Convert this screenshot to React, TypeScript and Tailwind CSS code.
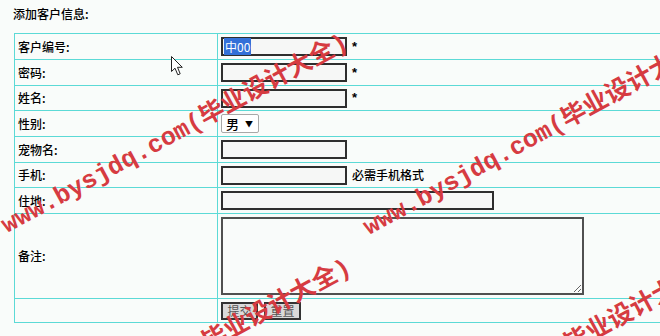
const rows: { label: string; h: string; kind: string; note?: string }[] = [
  { label: "客户编号:", h: "h-[26px]", kind: "code", note: "*" },
  { label: "密码:", h: "h-[26px]", kind: "input", note: "*" },
  { label: "姓名:", h: "h-[25px]", kind: "input", note: "*" },
  { label: "性别:", h: "h-[26px]", kind: "select" },
  { label: "宠物名:", h: "h-[26px]", kind: "input" },
  { label: "手机:", h: "h-[25px]", kind: "input", note: "必需手机格式" },
  { label: "住地:", h: "h-[26px]", kind: "wide" },
  { label: "备注:", h: "h-[85px]", kind: "textarea" },
  { label: "", h: "h-[24px]", kind: "buttons" },
];

function Field({ kind, note }: { kind: string; note?: string }) {
  const box = "inline-block h-[19px] border-2 border-[#2e2e2e] bg-[#f6f7f6] align-middle";
  let control = null;
  if (kind === "code") {
    control = (
      <span className={`${box} w-[126px] pl-px leading-[15px]`}>
        <span className="bg-[#3470d8] px-px font-normal text-white">中00</span>
      </span>
    );
  } else if (kind === "input") {
    control = <span className={`${box} w-[126px]`} />;
  } else if (kind === "wide") {
    control = <span className={`${box} w-[273px]`} />;
  } else if (kind === "select") {
    control = (
      <span className="inline-flex h-[19px] w-[38px] items-center rounded-[2px] border border-[#a8a8a8] bg-white pl-[4px] align-middle">
        <span className="text-[13px] leading-none">男</span>
        <span className="ml-[6px] text-[8px] leading-none">▼</span>
      </span>
    );
  } else if (kind === "textarea") {
    control = (
      <textarea
        readOnly
        className="block h-[78px] w-[363px] border-2 border-[#505050] bg-[#f9fbfa] outline-none"
      />
    );
  } else if (kind === "buttons") {
    control = (
      <span className="flex gap-[6px]">
        <button type="button" className="h-[18px] w-[37px] border-2 border-[#333] bg-[#dadada] text-[12px] leading-[14px] font-normal text-[#555]">
          提交
        </button>
        <button type="button" className="h-[18px] w-[37px] border-2 border-[#333] bg-[#dadada] text-[12px] leading-[14px] font-normal text-[#555]">
          重置
        </button>
      </span>
    );
  }
  return (
    <>
      {control}
      {note === "*" && <span className="ml-[5px] align-middle font-['Liberation_Sans',sans-serif] text-[13px] font-bold">*</span>}
      {note && note !== "*" && <span className="ml-[5px] align-middle">{note}</span>}
    </>
  );
}

// site watermark, repeated diagonally over the form
function Watermark({ className }: { className: string }) {
  return (
    <div
      className={`pointer-events-none absolute origin-left -rotate-[28.5deg] whitespace-nowrap font-['Liberation_Mono','Noto_Sans_CJK_SC',monospace] text-[25px] leading-[26px] font-bold text-[#d63b41] ${className}`}
    >
      www.bysjdq.com(毕业设计大全)
    </div>
  );
}

export default function App() {
  return (
    <div className="relative h-[336px] w-[660px] overflow-hidden bg-[#f9fcfa] font-['Noto_Sans_CJK_SC',sans-serif] text-[12px] font-medium text-black">
      <div className="pl-[13px] pt-[7px] leading-[14px]">添加客户信息:</div>
      <table className="ml-[14px] mt-[12px] w-[680px] border-collapse">
        <tbody>
          {rows.map((r, i) => (
            <tr key={i} className={r.h}>
              <td className="w-[203px] border border-[#5cdad6] pl-[3px] align-middle leading-[14px]">{r.label}</td>
              <td className="border border-[#5cdad6] p-0 pl-[3px] align-middle leading-[14px]">
                <Field kind={r.kind} note={r.note} />
              </td>
            </tr>
          ))}
        </tbody>
      </table>

      {/* mouse pointer */}
      <svg className="absolute left-[171px] top-[56px]" width="13" height="20" viewBox="0 0 13 20">
        <path d="M0.5 0.5V15.5L4 12.2L6.8 18.8L9.2 17.8L6.5 11.3H11.3Z" fill="#fff" stroke="#222" strokeWidth="1" />
      </svg>

      <Watermark className="left-[4px] top-[215px]" />
      <Watermark className="left-[366px] top-[217px]" />
      <Watermark className="left-[7px] top-[440px]" />
      <Watermark className="left-[369px] top-[442px]" />
    </div>
  );
}
